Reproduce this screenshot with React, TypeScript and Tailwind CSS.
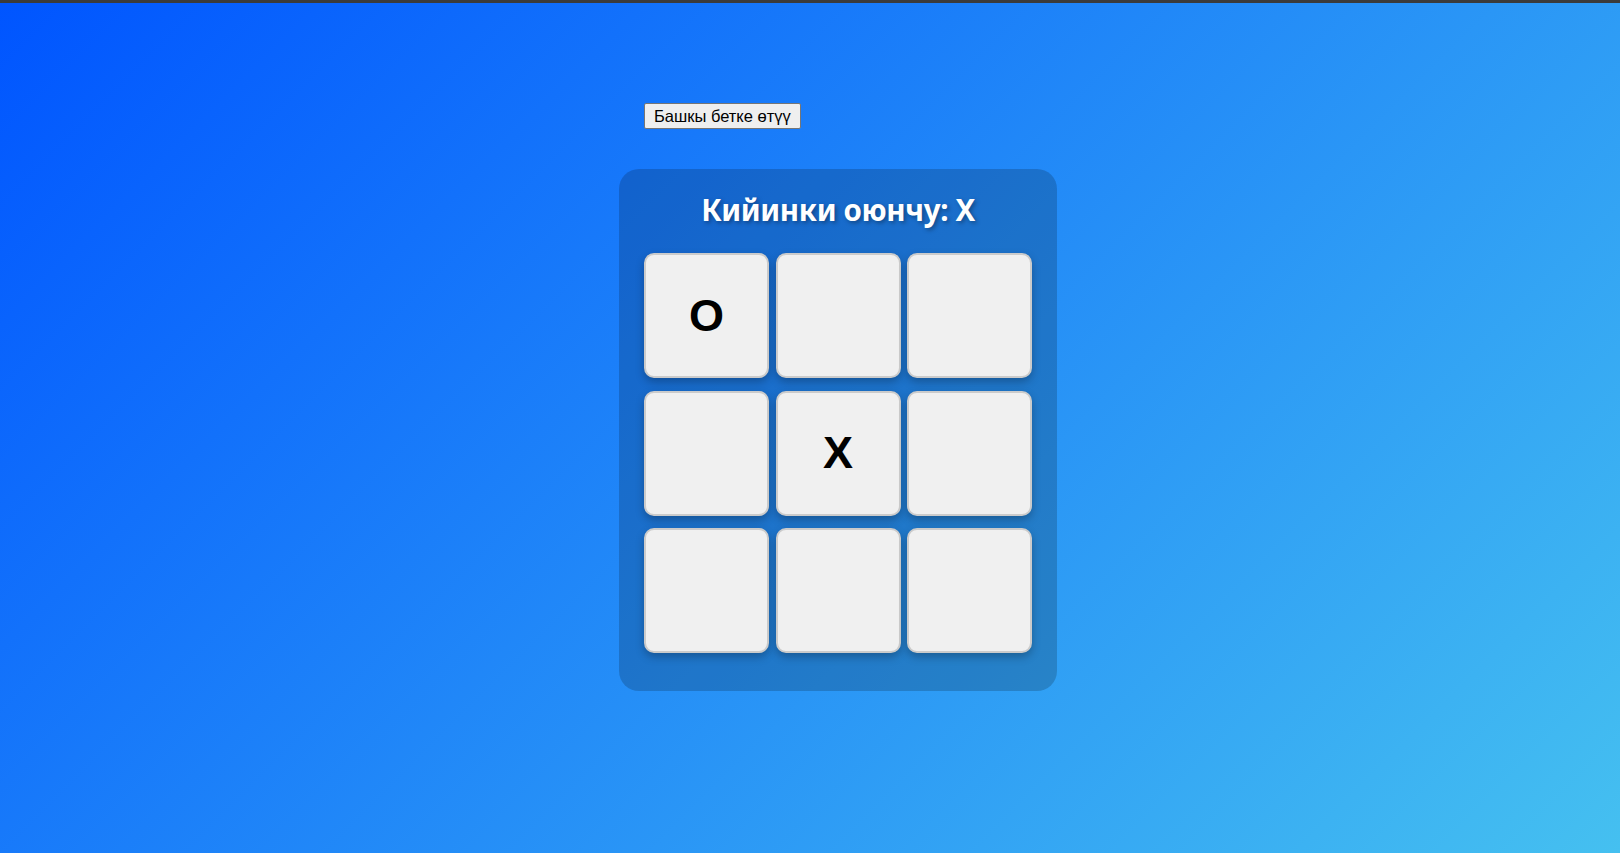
import React from 'react';

const board: string[] = ['O', '', '', '', 'X', '', '', '', ''];

const Cell: React.FC<{ value: string }> = ({ value }) => (
  <button className="flex h-[125px] w-[125px] items-center justify-center rounded-[10px] border-2 border-[#cbcbcb] bg-[#f0f0f0] text-[45px] font-bold text-black shadow-[0_4px_8px_rgba(0,0,0,0.25)] [font-family:'Liberation_Sans',Arial,sans-serif]">
    {value}
  </button>
);

export default function App() {
  return (
    <div className="flex min-h-[853px] flex-col">
      <div className="h-[3px] bg-[#3b3b3b]" />
      <div className="flex flex-1 justify-center bg-[linear-gradient(135deg,#0055ff,#45c0f0)] pl-[56px]">
        <div className="flex w-[438px] flex-col items-start pt-[100px]">
          <button className="ml-[25px] h-[26px] rounded-[2px] border border-[#767676] bg-[#efefef] px-[9px] text-[16.5px] leading-none text-black [font-family:'Liberation_Sans',Arial,sans-serif]">
            Башкы бетке өтүү
          </button>
          <div className="mt-[40px] w-[438px] rounded-[20px] bg-black/[0.18] px-[25px] pb-[38px] pt-[23px]">
            <h1 className="mb-[25px] text-center text-[29.5px] font-bold leading-[36px] tracking-[-0.35px] text-white [font-family:'Noto_Sans',sans-serif] [text-shadow:2px_2px_4px_rgba(0,0,0,0.35)]">
              Кийинки оюнчу: X
            </h1>
            <div className="grid grid-cols-[125px_125px_125px] gap-x-[6.5px] gap-y-[12.5px]">
              {board.map((v, i) => (
                <Cell key={i} value={v} />
              ))}
            </div>
          </div>
        </div>
      </div>
    </div>
  );
}
